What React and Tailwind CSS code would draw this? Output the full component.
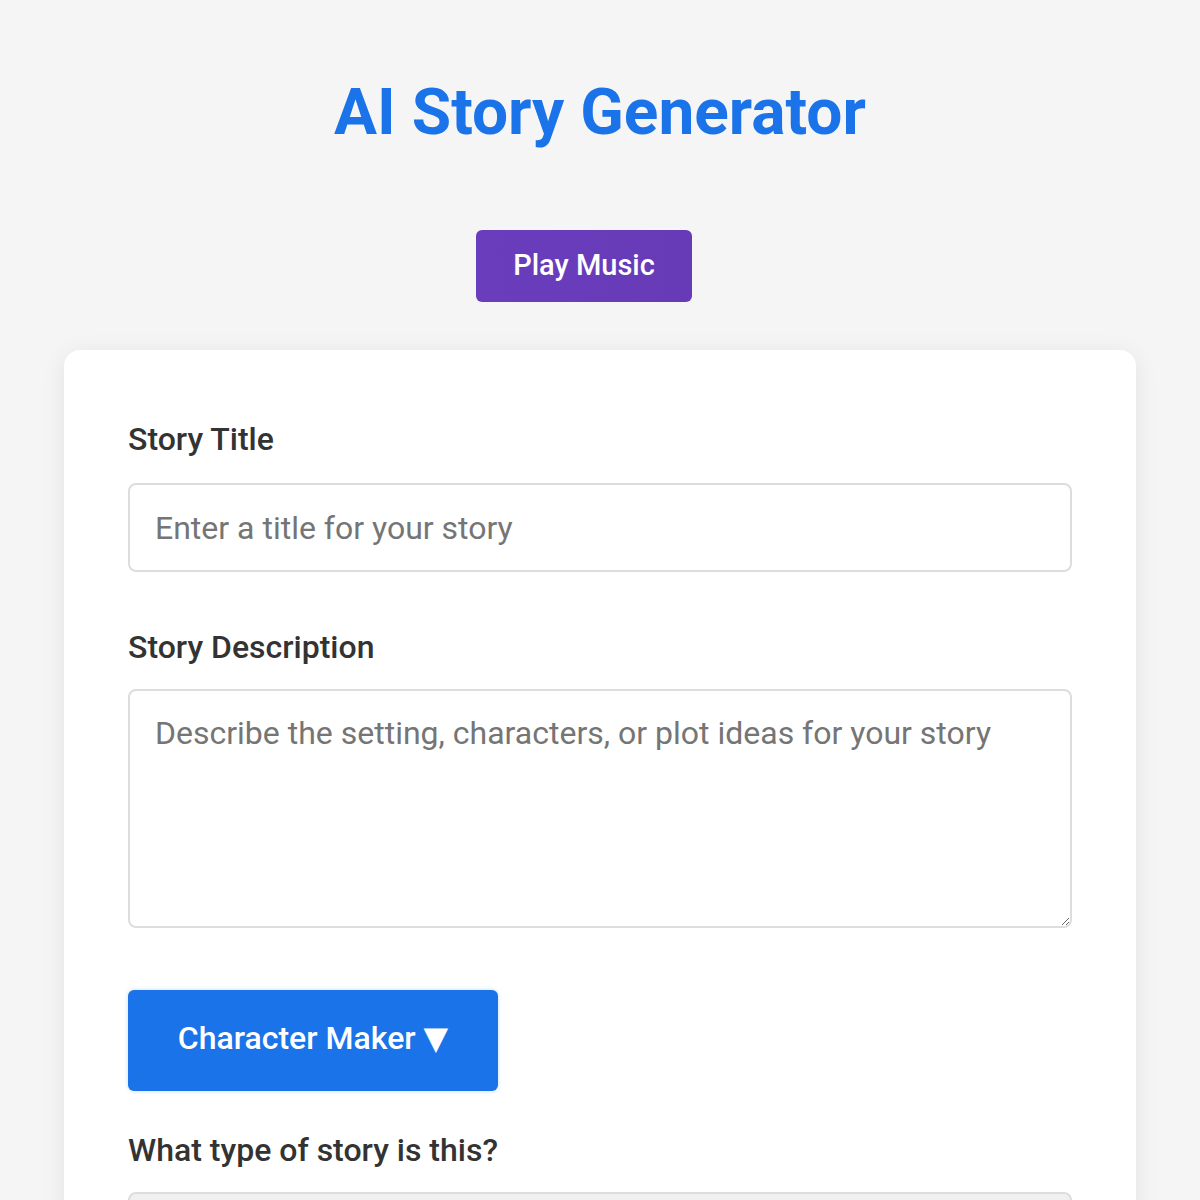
export default function App() {
  return (
    <div className="min-h-screen bg-[#f5f5f5] font-['Roboto',sans-serif] text-[#333]">
      <div className="mx-auto w-[1072px] pt-[75px]">
        {/* Header */}
        <h1 className="text-center text-[64px] leading-[76px] font-bold text-[#1a73e8]">
          AI Story Generator
        </h1>
        <div className="mt-[79px] flex justify-center pr-[32px]">
          <button className="h-[72px] w-[216px] rounded-[6px] bg-gradient-to-r from-[#6a3dbd] to-[#673ab7] text-[29px] font-medium text-white">
            Play Music
          </button>
        </div>

        {/* Form card */}
        <div className="mt-[48px] rounded-[16px] bg-white px-[64px] pt-[71px] pb-[64px] shadow-[0_4px_24px_rgba(0,0,0,0.08)]">
          <label className="block text-[32px] leading-[36px] font-medium text-[#333]">
            Story Title
          </label>
          <input
            type="text"
            placeholder="Enter a title for your story"
            className="mt-[26px] block h-[89px] w-full rounded-[8px] border-2 border-[#ddd] px-[25px] text-[32px] text-[#333] placeholder:text-[#757575] outline-none"
          />

          <label className="mt-[57px] block text-[32px] leading-[36px] font-medium text-[#333]">
            Story Description
          </label>
          <textarea
            placeholder="Describe the setting, characters, or plot ideas for your story"
            className="mt-[24px] block h-[239px] w-full rounded-[8px] border-2 border-[#ddd] px-[25px] py-[24px] text-[32px] leading-[36px] text-[#333] placeholder:text-[#757575] outline-none"
          />

          <button className="mt-[62px] h-[101px] w-[370px] rounded-[6px] bg-[#1a73e8] pb-[6px] text-[32px] font-medium text-white shadow-[0_0_4px_rgba(26,115,232,0.25)]">
            Character Maker <span className="font-['DejaVu_Sans']">▼</span>
          </button>

          <label className="mt-[41px] block text-[32px] leading-[36px] font-medium text-[#333]">
            What type of story is this?
          </label>
          <select className="mt-[24px] block h-[88px] w-full rounded-[8px] border-2 border-[#ddd] bg-[#f0f0f0] px-[25px] text-[32px] text-[#333]">
            <option>Adventure</option>
          </select>
        </div>
      </div>
    </div>
  )
}
